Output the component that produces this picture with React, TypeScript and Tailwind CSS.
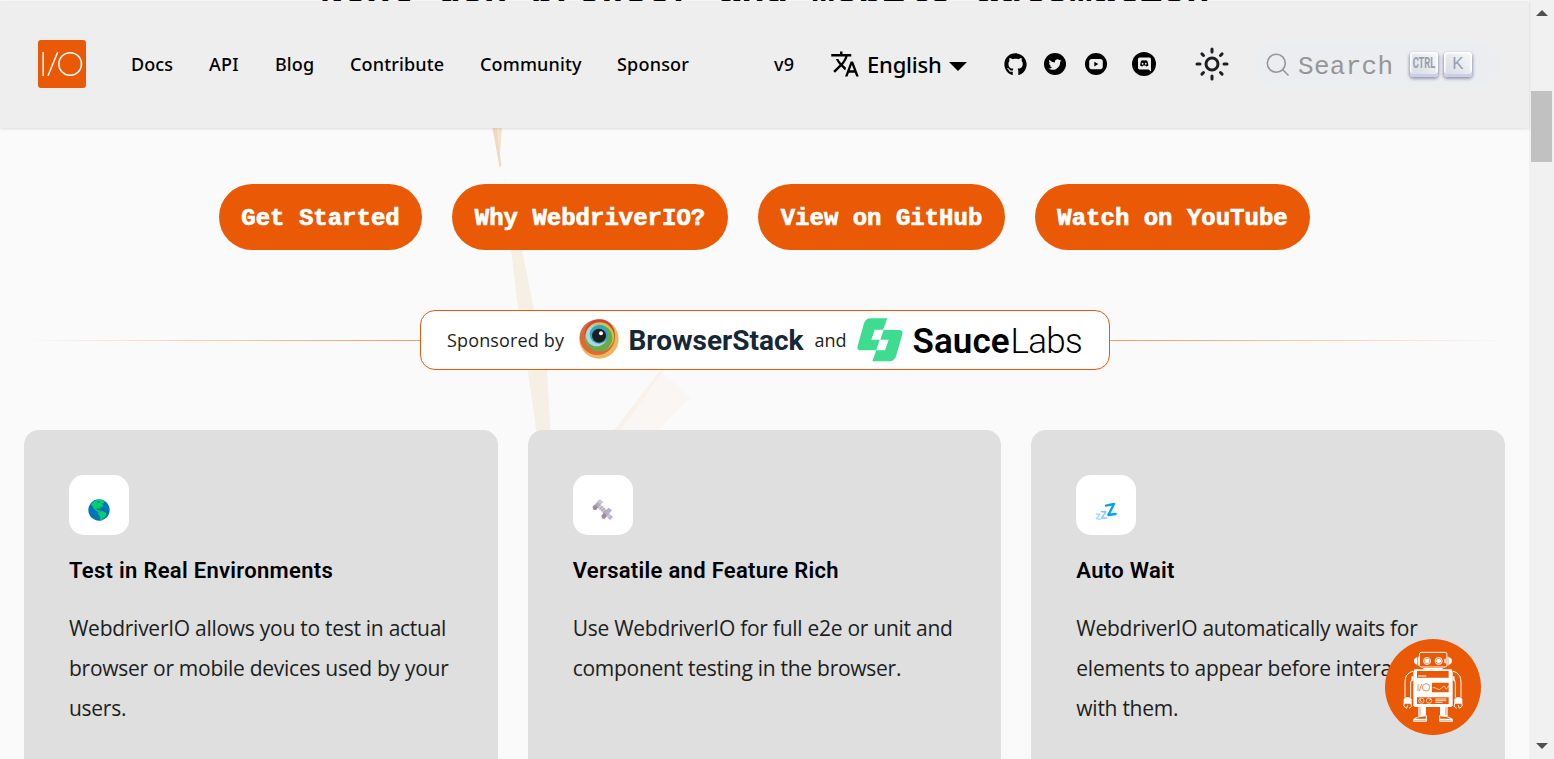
import type { ReactNode } from "react";
import { FaGithub, FaTwitter } from "react-icons/fa";

function Logo() {
  return (
    <svg className="h-12 w-12" viewBox="114 120 144 144" fill="none" stroke="#fff">
      <rect x="114" y="120" width="144" height="144" rx="9" fill="#ea5906" stroke="none" />
      <path d="M129.5 156v72M173 156.500l-29 71" strokeWidth="4.500" />
      <circle cx="210.500" cy="192" r="34" strokeWidth="4.500" />
    </svg>
  );
}

function TranslateIcon() {
  return (
    <svg className="h-[30px] w-[30px]" viewBox="0 0 24 24" fill="currentColor">
      <path d="M12.87 15.07l-2.54-2.51.03-.03c1.74-1.94 2.98-4.17 3.71-6.53H17V4h-7V2H8v2H1v1.990h11.170C11.500 7.920 10.440 9.750 9 11.350 8.070 10.320 7.300 9.190 6.690 8h-2c.73 1.630 1.730 3.170 2.980 4.560l-5.090 5.020L4 19l5-5 3.110 3.110.76-2.040zM18.500 10h-2L12 22h2l1.120-3h4.750L21 22h2l-4.500-12zm-2.620 7l1.620-4.330L19.120 17h-3.240z" />
    </svg>
  );
}

function SunIcon() {
  return (
    <svg className="h-9 w-9" viewBox="0 0 24 24" fill="none" stroke="#1c1e21" strokeWidth="2" strokeLinecap="round">
      <circle cx="12" cy="12" r="4" />
      <path d="M12 2v2M12 20v2M2 12h2M20 12h2M5.280 5.280l1.060 1.060M17.660 17.660l1.060 1.060M5.280 18.720l1.060-1.060M17.660 6.340l1.060-1.060" />
    </svg>
  );
}

function YoutubeCircle() {
  return (
    <svg className="h-[22px] w-[22px]" viewBox="0 0 22 22">
      <circle cx="11" cy="11" r="11" fill="#000" />
      <rect x="4.200" y="6" width="13.600" height="10.200" rx="2.600" fill="#eee" />
      <path d="M9.300 8.700v4.700l4-2.350z" fill="#000" />
    </svg>
  );
}

function DiscordCircle() {
  return (
    <svg className="h-6 w-6" viewBox="0 0 24 24">
      <circle cx="12" cy="12" r="12" fill="#000" />
      <path d="M7.700 5.500h9.600a1.700 1.700 0 0 1 1.700 1.700V19.500l-2.300-2H7.700A1.700 1.700 0 0 1 6 15.800V7.200a1.700 1.700 0 0 1 1.700-1.700z" fill="#eee" />
      <path d="M9.300 8.700c1-.6 1.900-.5 1.900-.5l.2.400h1.600l.2-.4s1 0 1.900.6c0 0 1.200 2 1.200 4.700 0 0-.7 1-2.100 1l-.7-.9h-2.500l-.7.9c-1.400 0-2.100-1-2.100-1 0-2.700 1.100-4.800 1.100-4.800z" fill="#000" />
      <ellipse cx="10.600" cy="11.800" rx=".85" ry=".95" fill="#eee" />
      <ellipse cx="13.800" cy="11.800" rx=".85" ry=".95" fill="#eee" />
    </svg>
  );
}

function BrowserStackMark() {
  return (
    <svg className="h-10 w-10" viewBox="0 0 120 120">
      <circle cx="60" cy="60" r="59" fill="#efb65f" />
      <circle cx="55" cy="55" r="53" fill="#dd6a35" />
      <circle cx="62" cy="46" r="45" fill="#d83d42" />
      <circle cx="62" cy="53" r="43" fill="#bfce48" />
      <circle cx="60" cy="57" r="40" fill="#69ab4a" />
      <circle cx="53" cy="50" r="32" fill="#a8d8e5" />
      <circle cx="60" cy="46" r="28" fill="#38a2c2" />
      <circle cx="60" cy="50" r="21" fill="#1d1d1d" />
      <circle cx="66" cy="43" r="6" fill="#fff" />
    </svg>
  );
}

function SauceMark() {
  return (
    <svg className="h-11 w-[46px]" viewBox="230 53 138 132">
      <path
        d="M271 54h50l-13 35h49q12 0 9 13l-19 66q-5 15-20 15h-51l12-33h-46q-14 0-10-13l19-68q5-15 20-15zM283 88l-10 30h25l-10 32h26l11-32h-25l10-30z"
        fill="#3ddc91"
        fillRule="evenodd"
      />
    </svg>
  );
}

function Globe() {
  return (
    <svg className="h-[22px] w-[22px]" viewBox="0 0 66 66">
      <circle cx="33" cy="33" r="32" fill="#0074ba" />
      <path d="M8 17C13 8 24 2 34 2c7 0 12 2 16 5l-3 5-4 4 3 5-8 4-3 4-7-2-3 5 6 1 4 4 10 0 9 5 1 6-4 6-6 4-5 7-3-3-1-10-6-7 2-6-8-4-8-8-3-7z" fill="#00d26a" />
      <path d="M29 7l9 1-3 4-7-1zM38 14l6-2-1 4z" fill="#0074ba" />
    </svg>
  );
}

function Bolt() {
  return (
    <svg className="h-[22px] w-[22px]" viewBox="0 0 66 66">
      <path d="M18 18L59 59" stroke="#cdc4d6" strokeWidth="13" />
      <path d="M24 31l9-9M29 36l9-9M34 41l9-9M51 59l8-8" stroke="#998ea4" strokeWidth="2.500" />
      <path d="M2 23L22 2l10 6-19 24z" fill="#b4acbc" />
      <path d="M2 23l7-6 9 8-7 9-7-2zM28 50l9-10 9 9-8 11-8-2z" fill="#998da5" />
      <path d="M16 8l8-7 10 8-8 8z" fill="#cdc4d6" />
      <path d="M36 40l14-14 10 8-15 16z" fill="#b9afc4" />
    </svg>
  );
}

function Sleep() {
  return (
    <svg className="h-[22px] w-[22px]" viewBox="0 0 66 66" fill="none" strokeLinecap="round" strokeLinejoin="round">
      <path d="M33 20l24-5-17 33 22-3" stroke="#00a6ed" strokeWidth="7" />
      <path d="M19 38h14L20 57h15" stroke="#83cbff" strokeWidth="4.500" />
      <path d="M4 45l11 1L4 59l12 2" stroke="#a5d8fa" strokeWidth="4" />
    </svg>
  );
}

function Robot() {
  return (
    <svg className="h-24 w-24" viewBox="45 27 288 288" fill="none" stroke="#fff" strokeWidth="3">
      <circle cx="189" cy="171" r="144" fill="#ea5906" stroke="none" />
      <rect x="148.500" y="67" width="82" height="44" rx="5" />
      <path d="M142 82q-10 2-10 11t10 11zM236 82q10 2 10 11t-10 11z" fill="#fff" stroke="none" />
      <path d="M145 80v27M234 80v27" />
      <circle cx="171" cy="93" r="10.500" />
      <circle cx="171" cy="93" r="6" fill="#fff" />
      <circle cx="206" cy="93" r="10.500" />
      <circle cx="206" cy="93" r="6" fill="#fff" />
      <path d="M225 86v14" strokeWidth="4" />
      <path d="M160 114h58v5h-58z" fill="#fff" stroke="none" />
      <path d="M134 118h110l4 8v100l-4 5H134l-4-5V126z" fill="#fff" stroke="none" />
      <path d="M141 123h95v20h-95zM186 158h50v29h-50zM141 202h95v20h-95z" fill="#ea5906" stroke="none" />
      <path d="M144 138h25" />
      <path d="M144 163v20M155 162l-7 22" stroke="#ea5906" strokeWidth="2" />
      <circle cx="168" cy="172" r="11" stroke="#ea5906" strokeWidth="2" />
      <path d="M188 173q8-1 14 4t14-4 10 1 10-7" strokeWidth="2" />
      <circle cx="154" cy="212" r="8" strokeWidth="2" />
      <circle cx="177" cy="212" r="8" strokeWidth="2" />
      <path d="M150 207l4 9M177 212l6-5M196 207h33M196 212h33M196 217h22" strokeWidth="2.500" />
      <path d="M130 123q-26 7-25 34v46M132 145q-10 3-10 14v44M248 123q26 7 25 34v46M246 145q10 3 10 14v44" />
      <path d="M127 139v13M251 139v13" strokeWidth="5" />
      <path d="M101 207q12-12 24 0v14h-24zM253 207q12-12 24 0v14h-24z" fill="#fff" stroke="none" />
      <path d="M103 219l-2 9 9 7 3-9M122 219l3 10-8 6M255 219l-3 10 8 6M275 219l2 9-9 7-3-9" strokeWidth="3" />
      <path d="M145 230h23v28h-23zM210 230h23v28h-23z" fill="#fff" stroke="none" />
      <path d="M150 231v24M228 231v24" stroke="#ea5906" strokeWidth="2" />
      <path d="M169 257v17h-39q0-10 17-14zM209 257v17h39q0-10-17-14z" fill="#ea5906" />
      <path d="M130 269h39M209 269h39" strokeWidth="5" />
    </svg>
  );
}

function Beams() {
  return (
    <svg className="pointer-events-none absolute left-[480px] top-[120px] h-[320px] w-[230px]" viewBox="0 0 690 960">
      <path d="M37 20h29l-7 100z" fill="#f1e5d0" />
      <path d="M37 20h12l15 115-5 10z" fill="#eddcc0" />
      <path d="M52 100l10 20 18 80 10 150 35 40-48-200-15-70z" fill="#f5ecde" />
      <path d="M92 380h32l40 200 34 170 14 190h-42l-28-200-28-180z" fill="#f5efe4" />
      <path d="M192 730l8 0 12 210h-10z" fill="#f7eee6" />
      <path d="M540 752l92 82-110 110H395z" fill="#faf6f3" />
      <path d="M540 752l6 5-130 183h-21z" fill="#f8f2ea" />
    </svg>
  );
}

function NavLink({ className, children }: { className: string; children: ReactNode }) {
  return (
    <a className={"block shrink-0 whitespace-nowrap font-['Noto_Sans',sans-serif] text-[18px] font-medium leading-7 " + className}>
      {children}
    </a>
  );
}

function Key({ children }: { children: ReactNode }) {
  return (
    <span className="flex h-[25px] w-[28px] items-center justify-center rounded-[4px] bg-linear-to-tr from-[#d5dbe4] to-[#f8f8f8] pb-[2px] text-[#969faf] shadow-[inset_0_-3px_0_0_#cdcde6,inset_0_0_1.5px_1.5px_#fff,0_1.5px_3px_0.5px_rgba(30,35,90,0.4)]">
      {children}
    </span>
  );
}

function CtaButton({ className, children }: { className: string; children: ReactNode }) {
  return (
    <button
      className={
        "flex h-[66px] items-center justify-center whitespace-pre rounded-[33px] bg-[#ea5906] pt-1 font-['Liberation_Mono',monospace] text-[24px] font-bold text-white [-webkit-text-stroke:0.7px_#fff] " +
        className
      }
    >
      {children}
    </button>
  );
}

function Feature({ icon, title, lines }: { icon: ReactNode; title: string; lines: string[] }) {
  return (
    <section className="h-[400px] min-w-0 flex-1 rounded-[15px] bg-[#dfdfdf] p-[45px]">
      <div className="flex h-[60px] w-[60px] items-center justify-center rounded-[15px] bg-white pt-[10px]">{icon}</div>
      <h3 className="mt-[21px] whitespace-nowrap font-['Roboto',sans-serif] text-[22px] font-semibold leading-[30px] tracking-[0.3px]">
        {title}
      </h3>
      <p className="mt-[22px] font-['Open_Sans',sans-serif] text-[21px] leading-10 tracking-[-0.27px] text-[#1c1e21]">
        {lines.map((l) => (
          <span key={l} className="block whitespace-nowrap">
            {l}
          </span>
        ))}
      </p>
    </section>
  );
}

export default function App() {
  return (
    <div className="relative flex h-[759px] w-[1554px] overflow-hidden bg-[#fafafa] text-black">
      <div className="relative flex w-[1529px] shrink-0 flex-col">
        <Beams />
        <div className="h-px shrink-0 overflow-hidden">
          <p className="ml-[320px] mt-[-27px] whitespace-nowrap font-['Liberation_Mono',monospace] text-[39px] font-bold leading-none">
            Next-gen browser and mobile automation
          </p>
        </div>
        <header className="relative flex h-[127px] shrink-0 items-center bg-[#eee] pb-[2px] pl-[38px] shadow-[0_1px_3px_0_rgba(0,0,0,0.12)]">
          <Logo />
          <nav className="ml-[45px] flex items-center">
            <NavLink className="w-[78px] tracking-[0.1px]">Docs</NavLink>
            <NavLink className="w-[66px] tracking-[0.2px]">API</NavLink>
            <NavLink className="w-[75px] tracking-[0.1px]">Blog</NavLink>
            <NavLink className="w-[130px] tracking-[0.15px]">Contribute</NavLink>
            <NavLink className="w-[137px] tracking-[0.15px]">Community</NavLink>
            <NavLink className="w-[157px] tracking-[0.2px]">Sponsor</NavLink>
            <NavLink className="w-[56px] tracking-[0.3px]">v9</NavLink>
            <TranslateIcon />
            <span className="ml-[7px] w-[82px] whitespace-nowrap font-['Noto_Sans',sans-serif] text-[22px] font-medium leading-7 tracking-[-0.2px]">
              English
            </span>
            <span className="mt-[5px] h-0 w-0 border-x-[9px] border-t-[9px] border-x-transparent border-t-black" />
          </nav>
          <div className="absolute left-[1003.500px] top-[51px] flex items-center">
            <FaGithub className="h-[23px] w-[23px]" />
            <span className="ml-[17.500px] flex h-[22px] w-[22px] items-center justify-center rounded-full bg-black">
              <FaTwitter className="h-[13px] w-[14px] text-[#eee]" />
            </span>
            <span className="ml-[19px]">
              <YoutubeCircle />
            </span>
            <span className="ml-[25px]">
              <DiscordCircle />
            </span>
          </div>
          <div className="absolute left-[1194px] top-[45px]">
            <SunIcon />
          </div>
          <div className="absolute left-[1254px] top-[41px] flex h-[45px] w-[245px] items-center rounded-full bg-[#ebedf0] pl-[12px]">
            <svg className="h-6 w-6" viewBox="0 0 24 24" fill="none" stroke="#969696" strokeWidth="1.600">
              <circle cx="10.300" cy="10.300" r="9" />
              <path d="M16.800 16.800L22.500 22.500" />
            </svg>
            <span className="ml-[8px] mt-[5px] w-[112px] font-['Liberation_Mono',monospace] text-[26px] leading-none tracking-[0.3px] text-[#969696]">
              Search
            </span>
            <Key>
              <span className="flex w-[34px] shrink-0 scale-x-[0.62] justify-center font-['Roboto',sans-serif] text-[15px] font-bold leading-none">
                CTRL
              </span>
            </Key>
            <span className="w-[6px]" />
            <Key>
              <span className="font-['Liberation_Sans',sans-serif] text-[17px] leading-none">K</span>
            </Key>
          </div>
        </header>

        <main className="relative flex flex-col px-6 pt-14">
          <div className="flex justify-center gap-[30px]">
            <CtaButton className="w-[203px]">Get Started</CtaButton>
            <CtaButton className="w-[276px]">Why WebdriverIO?</CtaButton>
            <CtaButton className="w-[247px]">View on GitHub</CtaButton>
            <CtaButton className="w-[275px]">Watch on YouTube</CtaButton>
          </div>

          <div className="mt-[60px] flex items-center">
            <div className="h-px flex-1 bg-linear-to-r from-[#ea590600] to-[#ea5906]/60" />
            <div className="flex h-[60px] w-[690px] items-center rounded-[15px] border border-[#ea5906] bg-white pl-[26.500px] font-['Open_Sans',sans-serif]">
              <span className="w-[131.500px] whitespace-nowrap text-[18px] tracking-[0.15px] text-[#1c1e21]">Sponsored by</span>
              <div className="-mt-[2px]">
                <BrowserStackMark />
              </div>
              <span className="ml-[10px] mt-[2px] w-[186px] whitespace-nowrap font-['Roboto',sans-serif] text-[28px] font-bold leading-none text-[#162736]">
                BrowserStack
              </span>
              <span className="w-[42px] text-[18px] text-[#1c1e21]">and</span>
              <SauceMark />
              <span className="ml-[10px] mt-[2px] flex whitespace-nowrap font-['Roboto',sans-serif] text-[35px] leading-none">
                <span className="w-[98px] font-semibold tracking-[0.1px]">Sauce</span>
                <span className="font-light tracking-[-0.7px]">Labs</span>
              </span>
            </div>
            <div className="h-px flex-1 bg-linear-to-r from-[#ea5906]/60 to-[#ea590600]" />
          </div>

          <div className="mt-[60px] flex gap-[30px]">
            <Feature
              icon={<Globe />}
              title="Test in Real Environments"
              lines={["WebdriverIO allows you to test in actual", "browser or mobile devices used by your", "users."]}
            />
            <Feature
              icon={<Bolt />}
              title="Versatile and Feature Rich"
              lines={["Use WebdriverIO for full e2e or unit and", "component testing in the browser."]}
            />
            <Feature
              icon={<Sleep />}
              title="Auto Wait"
              lines={["WebdriverIO automatically waits for", "elements to appear before interacting", "with them."]}
            />
          </div>
        </main>
        <div className="absolute left-[1385px] top-[639px]">
          <Robot />
        </div>
      </div>

      <aside className="flex w-[25px] flex-col items-center bg-[#f1f1f1]">
        <svg className="mt-[9px] h-[8px] w-[12px]" viewBox="0 0 12 8">
          <path d="M6 1l6 6H0z" fill="#505050" />
        </svg>
        <div className="mt-[74px] h-[71px] w-[21px] bg-[#c1c1c1]" />
        <svg className="mb-[9px] mt-auto h-[8px] w-[12px]" viewBox="0 0 12 8">
          <path d="M6 7l6-6H0z" fill="#505050" />
        </svg>
      </aside>
    </div>
  );
}
